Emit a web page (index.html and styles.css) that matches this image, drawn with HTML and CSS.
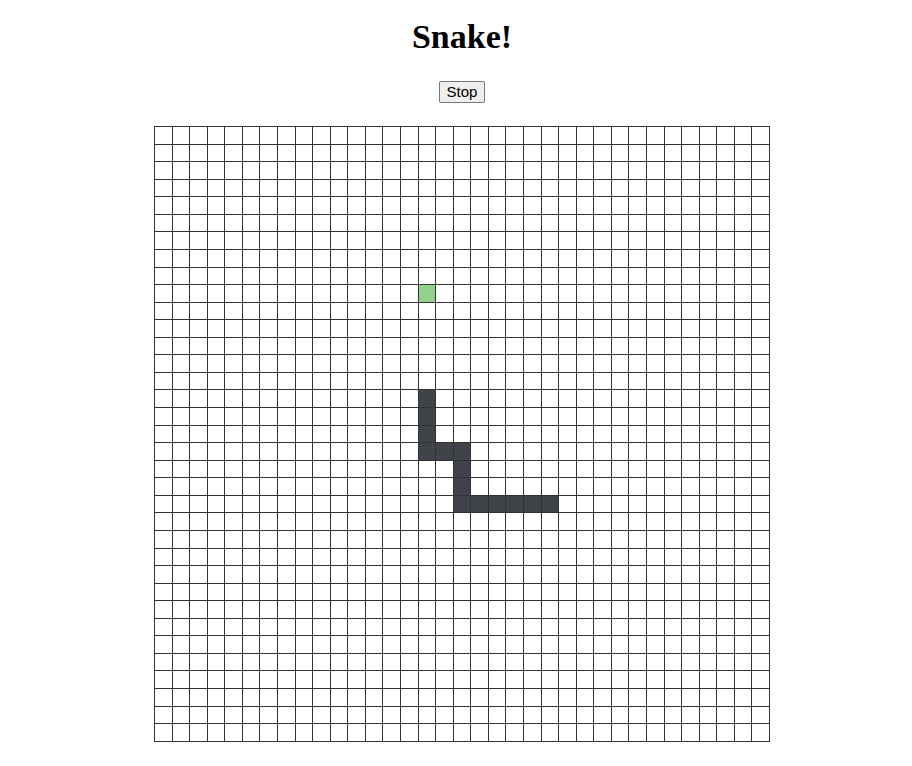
FILE: index.html
```html
<!DOCTYPE html>
<html lang="en">
<head>
<meta charset="utf-8">
<title>Snake!</title>
<link rel="stylesheet" href="styles.css">
</head>
<body>
<main class="game">
  <h1 class="title">Snake!</h1>
  <div class="controls">
    <button class="btn" type="button">Stop</button>
  </div>
  <div class="board" id="board"></div>
</main>
<script src="script.js"></script>
</body>
</html>
```

FILE: styles.css
```css
html, body {
  margin: 0;
  background: #ffffff;
}
body {
  padding: 17px 0 0 12px;
}
.game {
  display: flex;
  flex-direction: column;
  align-items: center;
}
.title {
  margin: 0;
  font-family: "Liberation Serif", "Times New Roman", serif;
  font-weight: bold;
  font-size: 34px;
  line-height: 39px;
  color: #000;
}
.controls {
  margin-top: 25px;
  display: flex;
  justify-content: center;
}
.btn {
  font-family: "Liberation Sans", Arial, sans-serif;
  font-size: 15px;
  line-height: 16px;
  padding: 2px 7px;
  border: 1px solid #767676;
  border-radius: 2px;
  background: #efefef;
  color: #000;
}
.board {
  margin-top: 23px;
  width: 616px;
  box-sizing: border-box;
  border-left: 1px solid #333333;
  border-top: 1px solid #333333;
  display: grid;
  grid-template-columns: repeat(35, 1fr);
  grid-auto-rows: 17.5714px;
}
.cell {
  border-right: 1px solid #333333;
  border-bottom: 1px solid #333333;
  background: #ffffff;
}
.cell.snake {
  background: #404349;
}
.cell.food {
  background: #93d18c;
}
```

FILE: script.js
```js
(function () {
  var N = 35;
  var snake = [
    [15, 15], [16, 15], [17, 15], [18, 15],
    [18, 16], [18, 17],
    [19, 17], [20, 17], [21, 17],
    [21, 18], [21, 19], [21, 20], [21, 21], [21, 22]
  ];
  var food = [9, 15];
  var set = {};
  snake.forEach(function (p) { set[p[0] + "," + p[1]] = true; });
  var board = document.getElementById("board");
  var frag = document.createDocumentFragment();
  for (var r = 0; r < N; r++) {
    for (var c = 0; c < N; c++) {
      var d = document.createElement("div");
      d.className = "cell";
      if (set[r + "," + c]) d.className += " snake";
      else if (r === food[0] && c === food[1]) d.className += " food";
      frag.appendChild(d);
    }
  }
  board.appendChild(frag);
})();
```
